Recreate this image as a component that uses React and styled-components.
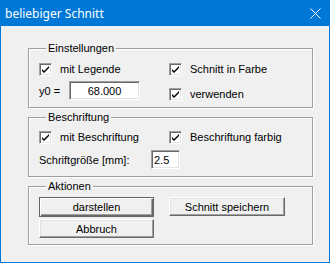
import React from "react";
import styled, { createGlobalStyle } from "styled-components";

const GlobalStyle = createGlobalStyle`
  html, body {
    margin: 0;
    padding: 0;
    background: #ffffff;
  }
`;

const Window = styled.div`
  width: 330px;
  height: 263px;
  box-sizing: border-box;
  border: 1px solid #0078d7;
  background: #f0f0f0;
  display: flex;
  flex-direction: column;
  font-family: "Liberation Sans", Arial, sans-serif;
  font-size: 11px;
  color: #000;
`;

const TitleBar = styled.div`
  height: 25px;
  flex: none;
  background: #0078d7;
  display: flex;
  align-items: center;
  margin-top: -1px;
  padding-top: 1px;
`;

const Title = styled.div`
  flex: 1;
  padding-left: 4px;
  color: #ffffff;
  font-family: "Noto Sans", "Open Sans", sans-serif;
  font-size: 12px;
`;

const CloseBox = styled.div`
  width: 28px;
  height: 25px;
  display: flex;
  align-items: center;
  justify-content: center;
`;

const Content = styled.div`
  padding: 16px 16px 0 27px;
  display: flex;
  flex-direction: column;
  gap: 3px;
`;

const Group = styled.fieldset`
  margin: 0;
  padding: ${(p) => p.$pad};
  border: 1px solid #a0a0a0;
  box-shadow: inset 1px 1px 0 #ffffff, 1px 1px 0 #ffffff;
  min-width: 0;
`;

const Legend = styled.legend`
  margin-left: 7px;
  padding: 0 2px;
  line-height: 13px;
  background: #f0f0f0;
`;

const Columns = styled.div`
  display: grid;
  grid-template-columns: 130px 1fr;
`;

const Column = styled.div`
  display: flex;
  flex-direction: column;
  align-items: flex-start;
  gap: ${(p) => p.$gap}px;
`;

const CheckRow = styled.label`
  display: flex;
  align-items: center;
  gap: 8px;
  height: 13px;
  line-height: 13px;
  white-space: nowrap;
`;

const Box = styled.span`
  width: 13px;
  height: 13px;
  box-sizing: border-box;
  flex: none;
  background: #ffffff;
  border: 1px solid;
  border-color: #a0a0a0 #ffffff #ffffff #a0a0a0;
  box-shadow: inset 1px 1px 0 #696969, inset -1px -1px 0 #e3e3e3;
  display: flex;
  align-items: center;
  justify-content: center;
`;

const FieldRow = styled.div`
  display: flex;
  align-items: center;
`;

const FieldLabel = styled.span`
  width: ${(p) => p.$w}px;
  white-space: nowrap;
`;

const Field = styled.div`
  width: ${(p) => p.$w}px;
  height: 19px;
  box-sizing: border-box;
  background: #ffffff;
  border: 1px solid;
  border-color: #a0a0a0 #ffffff #ffffff #a0a0a0;
  box-shadow: inset 1px 1px 0 #696969, inset -1px -1px 0 #e3e3e3;
  display: flex;
  align-items: center;
  justify-content: ${(p) => (p.$center ? "center" : "flex-start")};
  padding: 0 ${(p) => (p.$center ? "0 0 0" : "2px")};
  font-size: 11px;
`;

const ButtonGrid = styled.div`
  display: grid;
  grid-template-columns: 115px 116px;
  column-gap: 15px;
  row-gap: 2px;
`;

const Button = styled.div`
  height: ${(p) => (p.$default ? 20 : 19)}px;
  box-sizing: border-box;
  background: #f0f0f0;
  border: 1px solid;
  border-color: ${(p) =>
    p.$default ? "#646464" : "#ffffff #696969 #696969 #ffffff"};
  box-shadow: ${(p) =>
    p.$default
      ? "inset 1px 1px 0 #ffffff, inset -1px -1px 0 #696969, inset -2px -2px 0 #a0a0a0"
      : "inset -1px -1px 0 #a0a0a0, inset 1px 1px 0 #e3e3e3"};
  display: flex;
  align-items: center;
  justify-content: center;
  font-size: 11px;
`;

function Check() {
  return (
    <Box>
      <svg width="9" height="9" viewBox="0 0 9 9">
        <path d="M1 4 L3 6 L8 1 L8 3 L3 8 L1 6 Z" fill="#000" />
      </svg>
    </Box>
  );
}

function CheckBox({ label }) {
  return (
    <CheckRow>
      <Check />
      {label}
    </CheckRow>
  );
}

export default function App() {
  return (
    <>
      <GlobalStyle />
      <Window>
        <TitleBar>
          <Title>beliebiger Schnitt</Title>
          <CloseBox>
            <svg width="11" height="11" viewBox="0 0 11 11">
              <path d="M0.5 0.5 L10.5 10.5 M10.5 0.5 L0.5 10.5" stroke="#fff" strokeWidth="1" />
            </svg>
          </CloseBox>
        </TitleBar>
        <Content>
          <Group $pad="8px 10px 6px 10px">
            <Legend>Einstellungen</Legend>
            <Columns>
              <Column $gap={5}>
                <CheckBox label="mit Legende" />
                <FieldRow>
                  <FieldLabel $w={30}>y0 =</FieldLabel>
                  <Field $w={71} $center>68.000</Field>
                </FieldRow>
              </Column>
              <Column $gap={12}>
                <CheckBox label="Schnitt in Farbe" />
                <CheckBox label="verwenden" />
              </Column>
            </Columns>
          </Group>
          <Group $pad="7px 10px 7px 10px">
            <Legend>Beschriftung</Legend>
            <Columns>
              <Column $gap={6}>
                <CheckBox label="mit Beschriftung" />
                <FieldRow>
                  <FieldLabel $w={112}>Schriftgröße [mm]:</FieldLabel>
                  <Field $w={29}>2.5</Field>
                </FieldRow>
              </Column>
              <Column $gap={6}>
                <CheckBox label="Beschriftung farbig" />
              </Column>
            </Columns>
          </Group>
          <Group $pad="4px 10px 6px 10px">
            <Legend>Aktionen</Legend>
            <ButtonGrid>
              <Button $default>darstellen</Button>
              <Button>Schnitt speichern</Button>
              <Button>Abbruch</Button>
            </ButtonGrid>
          </Group>
        </Content>
      </Window>
    </>
  );
}
